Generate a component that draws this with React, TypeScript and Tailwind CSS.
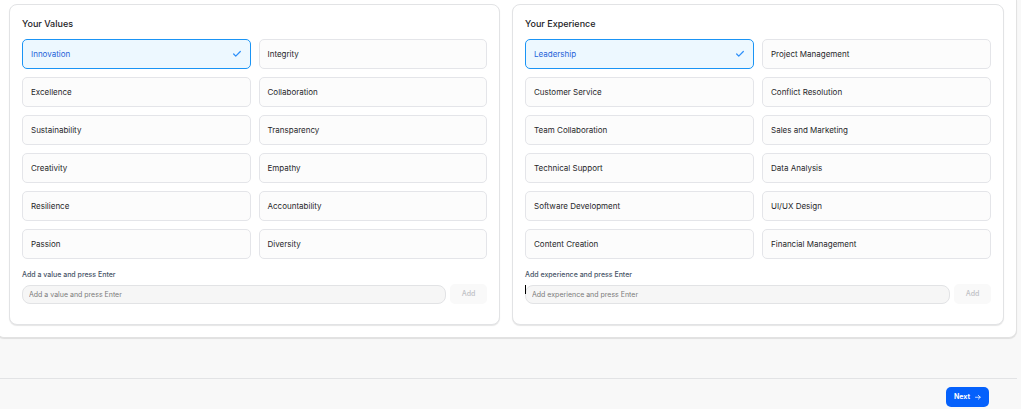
import { useState } from "react";
import type { FormEvent } from "react";

type PickerProps = {
  title: string;
  options: string[];
  initial: string;
  prompt: string;
  inputId: string;
  caret?: boolean;
};

const VALUES = [
  "Innovation",
  "Integrity",
  "Excellence",
  "Collaboration",
  "Sustainability",
  "Transparency",
  "Creativity",
  "Empathy",
  "Resilience",
  "Accountability",
  "Passion",
  "Diversity",
];

const EXPERIENCE = [
  "Leadership",
  "Project Management",
  "Customer Service",
  "Conflict Resolution",
  "Team Collaboration",
  "Sales and Marketing",
  "Technical Support",
  "Data Analysis",
  "Software Development",
  "UI/UX Design",
  "Content Creation",
  "Financial Management",
];

function CheckIcon() {
  return (
    <svg className="size-2.5 shrink-0" viewBox="0 0 24 24" fill="none" stroke="#2e90fa" strokeWidth="3" strokeLinecap="round" strokeLinejoin="round" aria-hidden="true">
      <path d="M20 6 9 17l-5-5" />
    </svg>
  );
}

function ArrowIcon() {
  return (
    <svg className="size-1.5 shrink-0" viewBox="0 0 24 24" fill="none" stroke="currentColor" strokeWidth="3" strokeLinecap="round" strokeLinejoin="round" aria-hidden="true">
      <path d="M2 13h19M13 5l8 8-8 8" />
    </svg>
  );
}

function Picker({ title, options, initial, prompt, inputId, caret }: PickerProps) {
  const [items, setItems] = useState(options);
  const [selected, setSelected] = useState([initial]);
  const [draft, setDraft] = useState("");

  const toggle = (name: string) =>
    setSelected((s) => (s.includes(name) ? s.filter((n) => n !== name) : [...s, name]));

  const add = (e: FormEvent) => {
    e.preventDefault();
    const name = draft.trim();
    if (!name) return;
    if (!items.includes(name)) setItems([...items, name]);
    if (!selected.includes(name)) setSelected([...selected, name]);
    setDraft("");
  };

  return (
    <section className="rounded-lg border border-[#e2e3e5] bg-white px-3 pt-3 pb-5 shadow-[0_1px_1px_rgba(0,0,0,0.1)]">
      <h2 className="text-[9px] leading-[14px] font-medium text-[#1c1c1f]">{title}</h2>
      <div className="mt-2 grid grid-cols-2 gap-2">
        {items.map((name) => {
          const on = selected.includes(name);
          return (
            <button
              key={name}
              type="button"
              aria-pressed={on}
              onClick={() => toggle(name)}
              className={
                on
                  ? "flex h-[30px] items-center justify-between rounded-[5px] border border-[#1a94f5] bg-[#edf8ff] px-2 text-left text-[8px] leading-3 text-[#2563d9]"
                  : "flex h-[30px] items-center justify-between rounded-[5px] border border-[#e4e5e9] bg-[#fcfcfc] px-2 text-left text-[8px] leading-3 text-[#27272a]"
              }
            >
              <span>{name}</span>
              {on && <CheckIcon />}
            </button>
          );
        })}
      </div>
      <form onSubmit={add} className="mt-2.5">
        <label htmlFor={inputId} className="block text-[7px] leading-3 font-medium text-[#475467]">
          {prompt}
        </label>
        <div className="relative mt-[3px] flex items-end gap-1">
          {caret && <span className="absolute top-px left-0 h-[9px] w-px bg-black" />}
          <input
            id={inputId}
            value={draft}
            onChange={(e) => setDraft(e.target.value)}
            placeholder={prompt}
            className="h-[19px] min-w-0 flex-1 rounded-lg border border-[#e2e3e5] bg-[#f6f6f6] px-1.5 text-[7px] leading-3 text-[#27272a] outline-none placeholder:text-[#7b7b7b]"
          />
          <button
            type="submit"
            disabled={!draft.trim()}
            className="h-5 w-[37px] rounded-[5px] bg-[#f2f2f3] text-[7px] leading-3 font-medium text-[#52525b] disabled:bg-[#f9f9f9] disabled:text-[#c0c1c6]"
          >
            Add
          </button>
        </div>
      </form>
    </section>
  );
}

export default function App() {
  return (
    <div className="min-h-screen overflow-hidden bg-[#f8f8f8] font-['Inter',sans-serif]">
      <main className="mr-1 -ml-1 rounded-b-lg border border-t-0 border-[#e2e2e2] bg-white px-3 pt-1 pb-3 shadow-[0_1px_1px_rgba(0,0,0,0.1)]">
        <div className="grid grid-cols-[491fr_492fr] gap-3">
          <Picker title="Your Values" options={VALUES} initial="Innovation" prompt="Add a value and press Enter" inputId="new-value" />
          <Picker title="Your Experience" options={EXPERIENCE} initial="Leadership" prompt="Add experience and press Enter" inputId="new-experience" caret />
        </div>
      </main>
      <footer className="mt-10 mr-1 flex justify-end border-t border-[#e2e3e5] pt-2 pr-7">
        <button type="button" className="flex h-5 items-center gap-[5px] rounded-[5px] bg-[#0561fc] px-2 text-[7px] leading-3 font-bold text-white">
          Next
          <ArrowIcon />
        </button>
      </footer>
    </div>
  );
}
